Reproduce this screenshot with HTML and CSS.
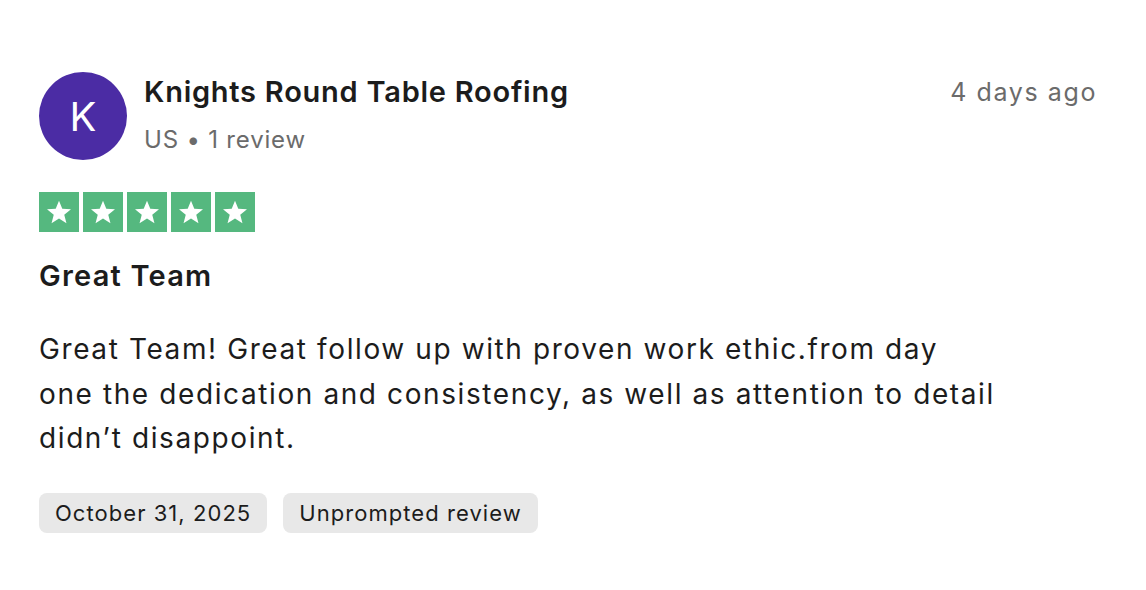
FILE: index.html
```html
<!DOCTYPE html>
<html>
<head>
<meta charset="utf-8">
<link rel="stylesheet" href="styles.css">
</head>
<body>
<div class="card">
  <div class="header">
    <div class="avatar">K</div>
    <div class="who">
      <div class="name">Knights Round Table Roofing</div>
      <div class="meta">US • 1 review</div>
    </div>
    <div class="date">4 days ago</div>
  </div>
  <div class="stars">
    <span class="star"><svg viewBox="0 0 24 24"><path d="M12 3.5l2.47 6.1 6.53.36-5.06 4.14 1.66 6.4L12 16.9l-5.6 3.6 1.66-6.4L3 9.96l6.53-.36z" fill="#fff"/></svg></span>
    <span class="star"><svg viewBox="0 0 24 24"><path d="M12 3.5l2.47 6.1 6.53.36-5.06 4.14 1.66 6.4L12 16.9l-5.6 3.6 1.66-6.4L3 9.96l6.53-.36z" fill="#fff"/></svg></span>
    <span class="star"><svg viewBox="0 0 24 24"><path d="M12 3.5l2.47 6.1 6.53.36-5.06 4.14 1.66 6.4L12 16.9l-5.6 3.6 1.66-6.4L3 9.96l6.53-.36z" fill="#fff"/></svg></span>
    <span class="star"><svg viewBox="0 0 24 24"><path d="M12 3.5l2.47 6.1 6.53.36-5.06 4.14 1.66 6.4L12 16.9l-5.6 3.6 1.66-6.4L3 9.96l6.53-.36z" fill="#fff"/></svg></span>
    <span class="star"><svg viewBox="0 0 24 24"><path d="M12 3.5l2.47 6.1 6.53.36-5.06 4.14 1.66 6.4L12 16.9l-5.6 3.6 1.66-6.4L3 9.96l6.53-.36z" fill="#fff"/></svg></span>
  </div>
  <h2 class="title">Great Team</h2>
  <p class="body">Great Team! Great follow up with proven work ethic.from day<br>one the dedication and consistency, as well as attention to detail didn’t disappoint.</p>
  <div class="tags">
    <span class="tag">October 31, 2025</span>
    <span class="tag">Unprompted review</span>
  </div>
</div>
</body>
</html>
```
FILE: styles.css
```css
html, body {
  margin: 0;
  padding: 0;
  background: #fff;
}
body {
  font-family: Inter, "Noto Sans", sans-serif;
  color: #1c1c1c;
}
.card {
  padding: 72px 49px 0 39px;
}
.header {
  display: flex;
  align-items: flex-start;
}
.avatar {
  width: 88px;
  height: 88px;
  border-radius: 50%;
  background: #4b2ca4;
  color: #fff;
  font-size: 40px;
  display: flex;
  align-items: center;
  justify-content: center;
  flex-shrink: 0;
}
.who {
  margin-left: 17px;
  flex: 1;
  padding-top: 2px;
}
.name {
  font-size: 29px;
  font-weight: 600;
  line-height: 36px;
  letter-spacing: 0.75px;
}
.meta {
  font-size: 24px;
  line-height: 32px;
  margin-top: 14px;
  color: #6b6b6b;
  letter-spacing: 0.8px;
}
.date {
  font-size: 25px;
  line-height: 36px;
  color: #6b6b6b;
  padding-top: 2px;
  letter-spacing: 1.6px;
}
.stars {
  display: flex;
  gap: 4px;
  margin-top: 32px;
}
.star {
  width: 40px;
  height: 40px;
  background: #55b87f;
  display: flex;
  align-items: center;
  justify-content: center;
}
.star svg {
  width: 32px;
  height: 32px;
}
.title {
  margin: 24px 0 0;
  font-size: 29px;
  font-weight: 600;
  line-height: 40px;
  letter-spacing: 1.2px;
}
.body {
  margin: 31px 0 0;
  font-size: 28px;
  line-height: 44.5px;
  max-width: 1000px;
  letter-spacing: 1.6px;
}
.tags {
  display: flex;
  gap: 16px;
  margin-top: 32px;
}
.tag {
  background: #e8e8e8;
  border-radius: 8px;
  height: 40px;
  padding: 0 16px;
  font-size: 22px;
  display: flex;
  align-items: center;
  letter-spacing: 1.05px;
}
```
